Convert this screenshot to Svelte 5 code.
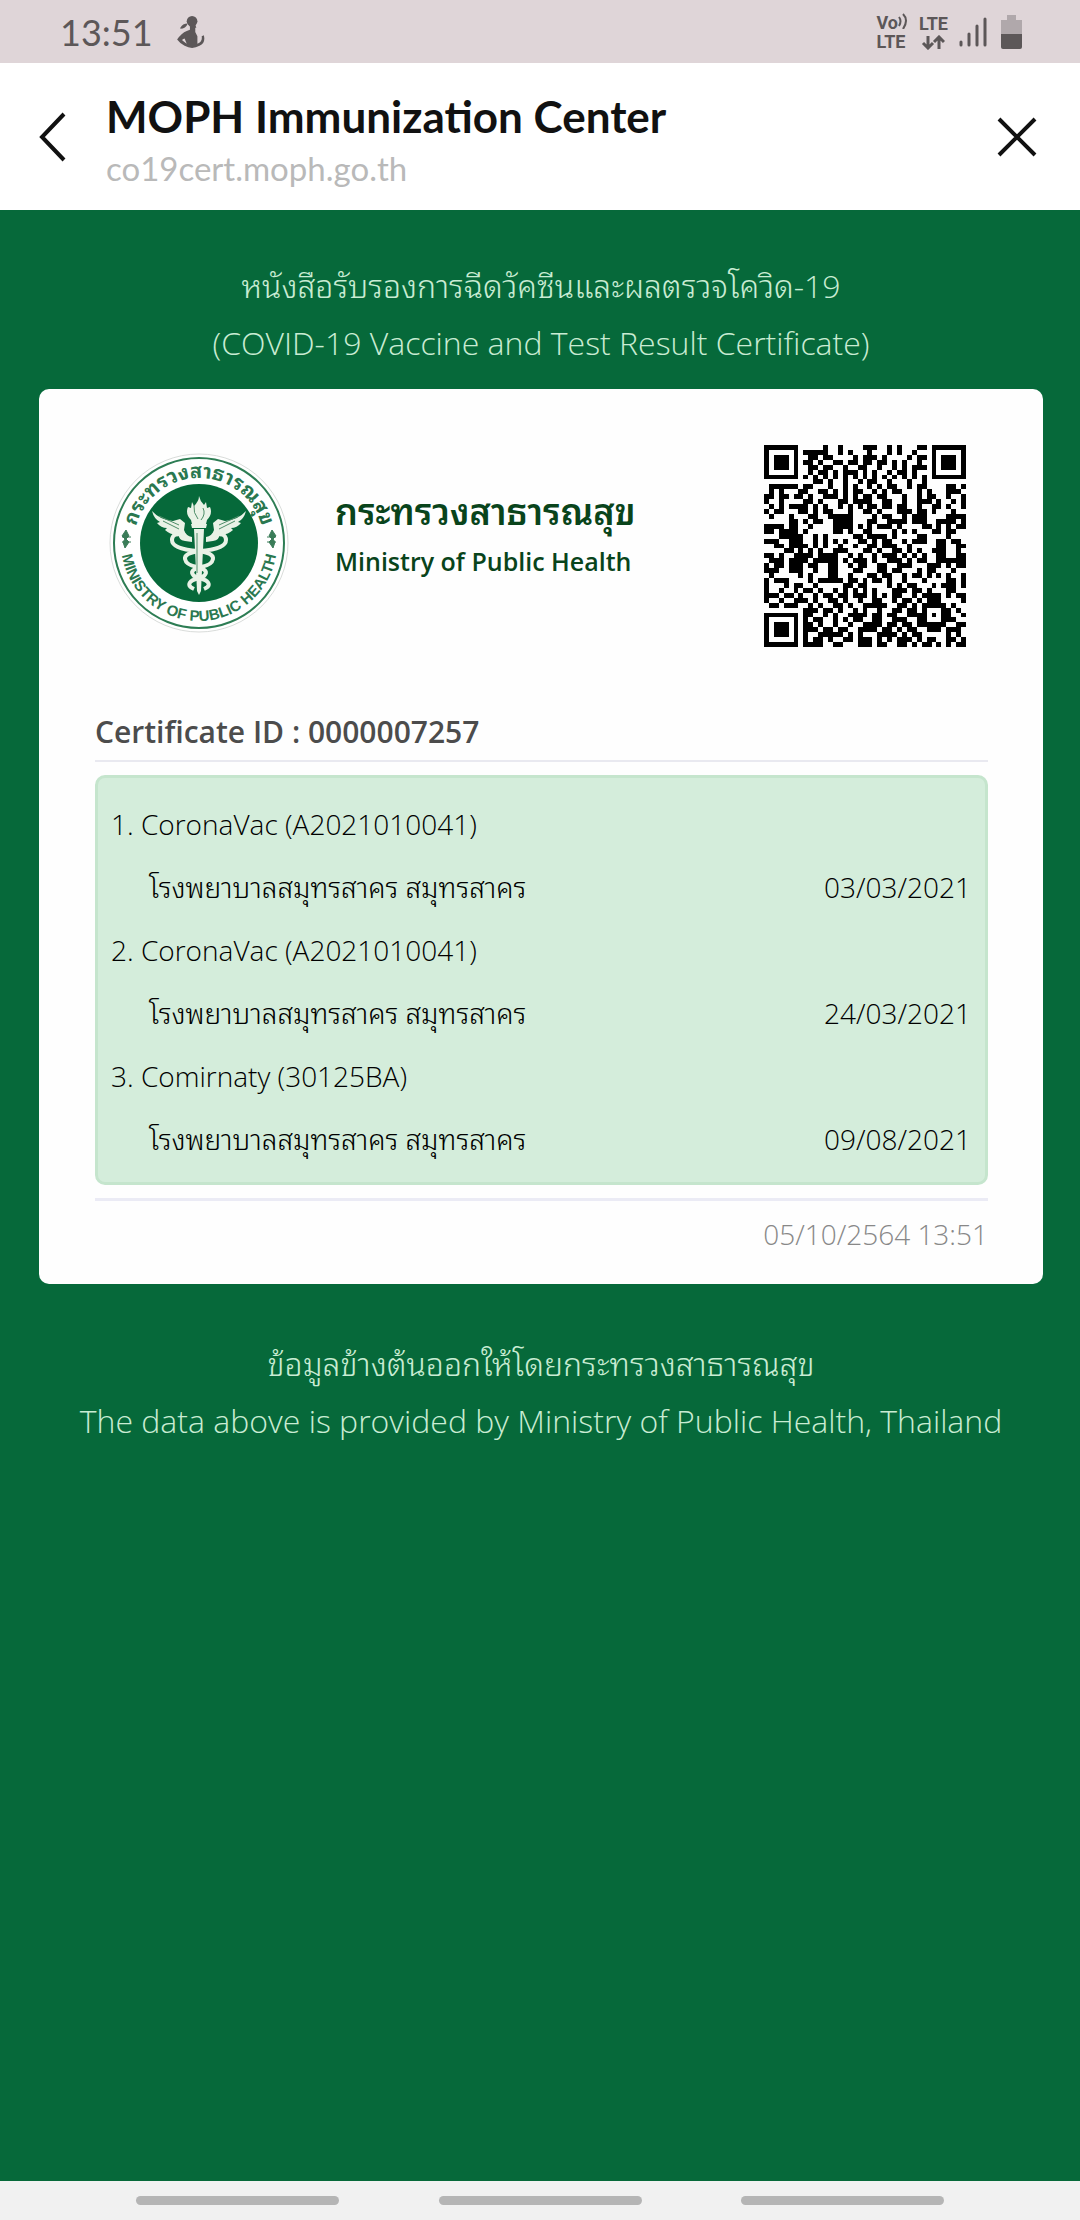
<script>
  const doses = [
    { name: 'CoronaVac (A2021010041)', place: 'โรงพยาบาลสมุทรสาคร สมุทรสาคร', date: '03/03/2021' },
    { name: 'CoronaVac (A2021010041)', place: 'โรงพยาบาลสมุทรสาคร สมุทรสาคร', date: '24/03/2021' },
    { name: 'Comirnaty (30125BA)', place: 'โรงพยาบาลสมุทรสาคร สมุทรสาคร', date: '09/08/2021' }
  ];

  const qr = [
    '#######.....#..#....###..#.#...##.#######',
    '#.....#.#####..#.#...#...#.#..#...#.....#',
    '#.###.#..##.##....#.###.#....#.##.#.###.#',
    '#.###.#.##.#..##.##.##.##.#.#..#..#.###.#',
    '#.###.#..##.##..#..##..#..#.#.###.#.###.#',
    '#.....#..#.##.#.###.#.#..#.##.#...#.....#',
    '#######.#.#.#.#.#.#.#.#.#.#.#.#.#.#######',
    '..........##.#..#..#.##..#...#..#........',
    '.######.##...#..#.#..#.#.##..#.##....##.#',
    '.#.#...##..##.#.#.##..#.#.##...#.#...###.',
    '##.##.##.#..###.#.#.##.##...#..#.##..#..#',
    '#..#....##.#...##.####..##..#..###.#..#.#',
    '.#.#.####.#.#..#.#.#.##.##.##..#..##.#..#',
    '#.##...##.#.##...#..##.#...###.##.#...#..',
    '.#...#...##..#####....#.##..#.###....####',
    '.....##.#.##..####...##..####.###..####.#',
    '####.##..#....####.#.#.###.#....##.#.#.##',
    '##.####.#.....##.#..##....#.#.#...##.##..',
    '...#####..#.#.....##.####.#....##....#...',
    '###..###..#.#.#.#..##.#.##..#.###..##.##.',
    '..##.####.#.#..#..#..##.###..#.....##..##',
    '....##.#.#.#..###...##.#..##.#.#..###..#.',
    '##.#..####.####..#.#..#.###.#.#.#..##..##',
    '.###.####.#####.#.###.#..###.#.##..######',
    '#.##.###.##..##..#.##..##..###...###.#.##',
    '###..###..#..##...##...##.##...#.##...#..',
    '.#.....#.#...##..#...##.##..#.##.#.#.#..#',
    '#.###....#.#####.##.#.##.#..#...#....##.#',
    '#...#.##..#.....##.##....#.#.##...#.###.#',
    '#..#..#.##.#..#.#.#.#.#...###.##.#...##..',
    '###.##.#..#.##.##.###.#.#.##..#.####.#.##',
    '#..#..###.#..##.#..#..##..#.##.#.###....#',
    '.##.###..#.#..##.#..#####..##.#.#####.#..',
    '........###.##.#..#.#..#..##.##.#...##.#.',
    '#######.##..#.#..####.##.##..####.#.##..#',
    '#.....#.#.##..#.#.##..##..###..##...###..',
    '#.###.#.##.#..#..#..####.##.##.######..##',
    '#.###.#.###.##.##..####.##.#.##..###.###.',
    '#.###.#.#..#####.#.#...####.#.##.....#.#.',
    '#.....#.#.##.#..##.###.#.#.###.#.##..##.#',
    '#######.####..##...###.##..##.#.##.#.#.##'
  ];
  const qrPath = qr
    .map((row, y) => [...row].map((c, x) => (c === '#' ? `M${x} ${y}h1v1h-1z` : '')).join(''))
    .join('');
</script>

<div class="screen">
  <header class="status">
    <span class="clock">13:51</span>
    <svg class="person" viewBox="0 0 26 30" aria-hidden="true">
      <circle cx="14" cy="5" r="5" />
      <path d="M11 8h6l1 3h-1v4l2 4v7q5-2 4-7l2-1q2 7-4 10-7 4-14 0-4-2-7-6 4-6 9-8l3-1v-3zM3 11q2-4 7-4-2 5-7 5zM7 21q-3 1-2 2l4 3z" fill-rule="evenodd" />
    </svg>
    <span class="grow"></span>
    <span class="net">
      <span class="vo">Vo<svg viewBox="0 0 10 16" class="waves" aria-hidden="true"><path d="M1 4q3 4 0 9M5 1q6 6 0 15" /></svg></span>
      <span>LTE</span>
    </span>
    <span class="net center"><span>LTE</span>
      <svg viewBox="0 0 24 15" class="arrows" aria-hidden="true"><path d="M7 1v12M2 8l5 5 5-5M18 14V2M13 7l5-5 5 5" /></svg>
    </span>
    <svg class="signal" viewBox="0 0 28 32" aria-hidden="true"><path d="M2 26v3M10 18v11M18 10v19M26 3v26" /></svg>
    <svg class="battery" viewBox="0 0 22 34" aria-hidden="true">
      <path d="M6 0h9v5h6v15H0V5h6z" fill="#b0a8ab" /><path d="M0 19h21v13q0 2-2 2H2q-2 0-2-2z" />
    </svg>
  </header>

  <nav class="bar">
    <button class="icon" aria-label="Back">
      <svg viewBox="0 0 28 50"><path d="M25 2 3 25l22 23" /></svg>
    </button>
    <div class="site">
      <h1>MOPH Immunization Center</h1>
      <p>co19cert.moph.go.th</p>
    </div>
    <button class="icon close" aria-label="Close">
      <svg viewBox="0 0 40 40"><path d="M2 2l36 36M38 2 2 38" /></svg>
    </button>
  </nav>

  <main>
    <div class="lead">
      <p>หนังสือรับรองการฉีดวัคซีนและผลตรวจโควิด-19</p>
      <p>(COVID-19 Vaccine and Test Result Certificate)</p>
    </div>

    <section class="card">
      <div class="brand">
        <svg class="seal" viewBox="0 0 180 180" role="img" aria-label="Ministry of Public Health seal">
          <defs>
            <path id="arc-top" d="M25 90a65 65 0 0 1 130 0" />
            <path id="arc-bottom" d="M12 90a78 78 0 0 0 156 0" />
          </defs>
          <circle cx="90" cy="90" r="89" fill="#fff" stroke="#d9dcda" />
          <circle cx="90" cy="90" r="85" fill="none" stroke="#2d7d54" stroke-width="2" />
          <circle cx="90" cy="90" r="59" fill="#06693a" />
          <text class="arc thai-arc"><textPath href="#arc-top" startOffset="50%">กระทรวงสาธารณสุข</textPath></text>
          <text class="arc"><textPath href="#arc-bottom" startOffset="50%">MINISTRY OF PUBLIC HEALTH</textPath></text>
          <path d="M17 77l3 6-3 3 3 3-4 6-2-6 2-3-3-3zM13 84h9M13 89h9M163 77l-3 6 3 3-3 3 4 6 2-6-2-3 3-3zM158 84h9M158 89h9" fill="#3b7d59" stroke="#3b7d59" />
          <g fill="#e9f2e6">
            <path d="M90 43q1 5 5 9l2-3 1 6 3-1q3 7-3 13l-1 4H83l-1-4q-6-6-3-13l3 1 1-6 2 4q5-5 5-10z" />
            <path d="M82 71h16l-1 4H83zM85 76h10l-3 62-2 4-2-4z" />
            <path d="M83 84q-6-1-8-7l1-7-5-4-7 2q-13-1-21-10 2 8 8 11l-3 1q4 5 10 5l-2 2q7 6 14 4-1 6 6 7l7 1z" />
            <path d="M97 84q6-1 8-7l-1-7 5-4 7 2q13-1 21-10-2 8-8 11l3 1q-4 5-10 5l2 2q-7 6-14 4 1 6-6 7l-7 1z" />
          </g>
          <path d="M76 82q-13-3-13 5 0 9 26 11 16 2 15 8-1 6-12 8-13 3-7 9l11 4q8 5-1 9M104 82q13-3 13 5 0 9-26 11-16 2-15 8 1 6 12 8 13 3 7 9l-11 4q-8 5 1 9" fill="none" stroke="#e9f2e6" stroke-width="4" />
          <path d="M85 52q-1 8 4 14M94 55q3 6-2 12M54 68l16 8M50 63l20 9M126 68l-16 8M130 63l-20 9M88 80v40" fill="none" stroke="#4e8d68" />
        </svg>
        <div class="ministry">
          <strong>กระทรวงสาธารณสุข</strong>
          <span>Ministry of Public Health</span>
        </div>
        <svg class="qr" viewBox="0 0 41 41" shape-rendering="crispEdges" role="img" aria-label="QR code"><path d={qrPath} /></svg>
      </div>

      <h2>Certificate ID : 0000007257</h2>
      <ol class="doses">
        {#each doses as dose, i}
          <li>
            <p>{i + 1}. {dose.name}</p>
            <p class="visit"><span>{dose.place}</span><time>{dose.date}</time></p>
          </li>
        {/each}
      </ol>
      <p class="stamp">05/10/2564 13:51</p>
    </section>

    <div class="lead source">
      <p>ข้อมูลข้างต้นออกให้โดยกระทรวงสาธารณสุข</p>
      <p>The data above is provided by Ministry of Public Health, Thailand</p>
    </div>
  </main>

  <footer><i></i><i></i><i></i></footer>
</div>

<style>
  :global(body) { margin: 0; }
  .screen {
    min-height: 100vh;
    display: flex;
    flex-direction: column;
    background: #06693a;
    font-family: "Open Sans", "Noto Sans Thai Looped", "Loma", "Noto Sans", sans-serif;
    font-weight: 300;
  }
  p, h1, h2, ol { margin: 0; padding: 0; }
  .status {
    height: 63px;
    padding: 0 57px 0 60px;
    box-sizing: border-box;
    display: flex;
    align-items: center;
    background: #dfd5d8;
    color: #5c5758;
    fill: #5c5758;
  }
  .clock { font: 400 36px/40px "Lato", sans-serif; }
  .person { width: 28px; height: 32px; margin-left: 24px; }
  .grow { flex: 1; }
  .net {
    display: flex;
    flex-direction: column;
    font: 700 18px/19px Roboto, sans-serif;
    margin-right: 11px;
  }
  .center { align-items: center; }
  .net svg, .signal { fill: none; stroke: #5c5758; stroke-width: 3; }
  .vo { display: flex; height: 19px; }
  .waves { width: 10px; height: 16px; }
  .net .waves { stroke-width: 2; }
  .arrows { width: 24px; height: 15px; margin-top: 2px; }
  .signal { width: 28px; height: 32px; stroke-linecap: round; margin-right: 14px; }
  .battery { width: 22px; height: 34px; }
  .bar {
    height: 147px;
    padding: 0 42px 0 39px;
    box-sizing: border-box;
    display: flex;
    align-items: center;
    background: #fff;
  }
  .icon { border: 0; background: none; padding: 0; display: flex; }
  .icon svg { width: 28px; height: 50px; fill: none; stroke: #111; stroke-width: 4; }
  .icon.close svg { width: 42px; height: 40px; }
  .site { flex: 1; padding: 6px 0 0 39px; }
  h1 { font: 700 44px/56px "Lato", sans-serif; color: #111; }
  .site p { font: 400 33px/48px "Lato", sans-serif; color: #b9b9b9; }
  main { flex: 1; padding: 47px 37px 0 39px; }
  .lead { text-align: center; color: #c9ecd3; font-size: 32px; line-height: 57px; padding-bottom: 18px; }
  .card {
    background: #fefefe;
    border-radius: 10px;
    padding: 56px 55px 22px 56px;
  }
  .brand { display: flex; align-items: flex-start; padding: 0 22px 0 14px; }
  .seal { width: 180px; height: 180px; margin-top: 8px; }
  .arc { font: 700 15px "Liberation Sans", sans-serif; fill: #2a7850; text-anchor: middle; }
  .thai-arc { font: 700 20px "Noto Sans Thai Looped", "Loma", sans-serif; }
  .ministry { flex: 1; padding: 40px 0 0 46px; display: flex; flex-direction: column; color: #09441b; }
  .ministry strong { font-size: 36px; line-height: 54px; font-weight: 600; }
  .ministry span { font-size: 25px; line-height: 44px; font-weight: 600; }
  .qr { width: 202px; height: 202px; }
  h2 {
    margin-top: 58px;
    padding-bottom: 1px;
    font-size: 30px;
    line-height: 54px;
    font-weight: 600;
    color: #4c4c4c;
    border-bottom: 2px solid #e9e9f0;
  }
  .doses {
    list-style: none;
    margin: 13px 0;
    padding: 15px 14px 11px 13px;
    border: 3px solid #c5e5cd;
    border-radius: 10px;
    background: #d4eddb;
    color: #000;
    font-size: 28px;
    line-height: 63px;
  }
  .visit { display: flex; justify-content: space-between; padding-left: 38px; }
  .stamp {
    border-top: 3px solid #ebebf5;
    padding-top: 5px;
    text-align: right;
    color: #888;
    font-size: 28px;
    line-height: 56px;
  }
  .source { padding-top: 51px; }
  footer {
    height: 39px;
    display: flex;
    justify-content: space-between;
    align-items: center;
    padding: 0 136px;
    background: #f1f1f1;
  }
  footer i { width: 203px; height: 9px; border-radius: 5px; background: #b5b5b5; }
</style>
